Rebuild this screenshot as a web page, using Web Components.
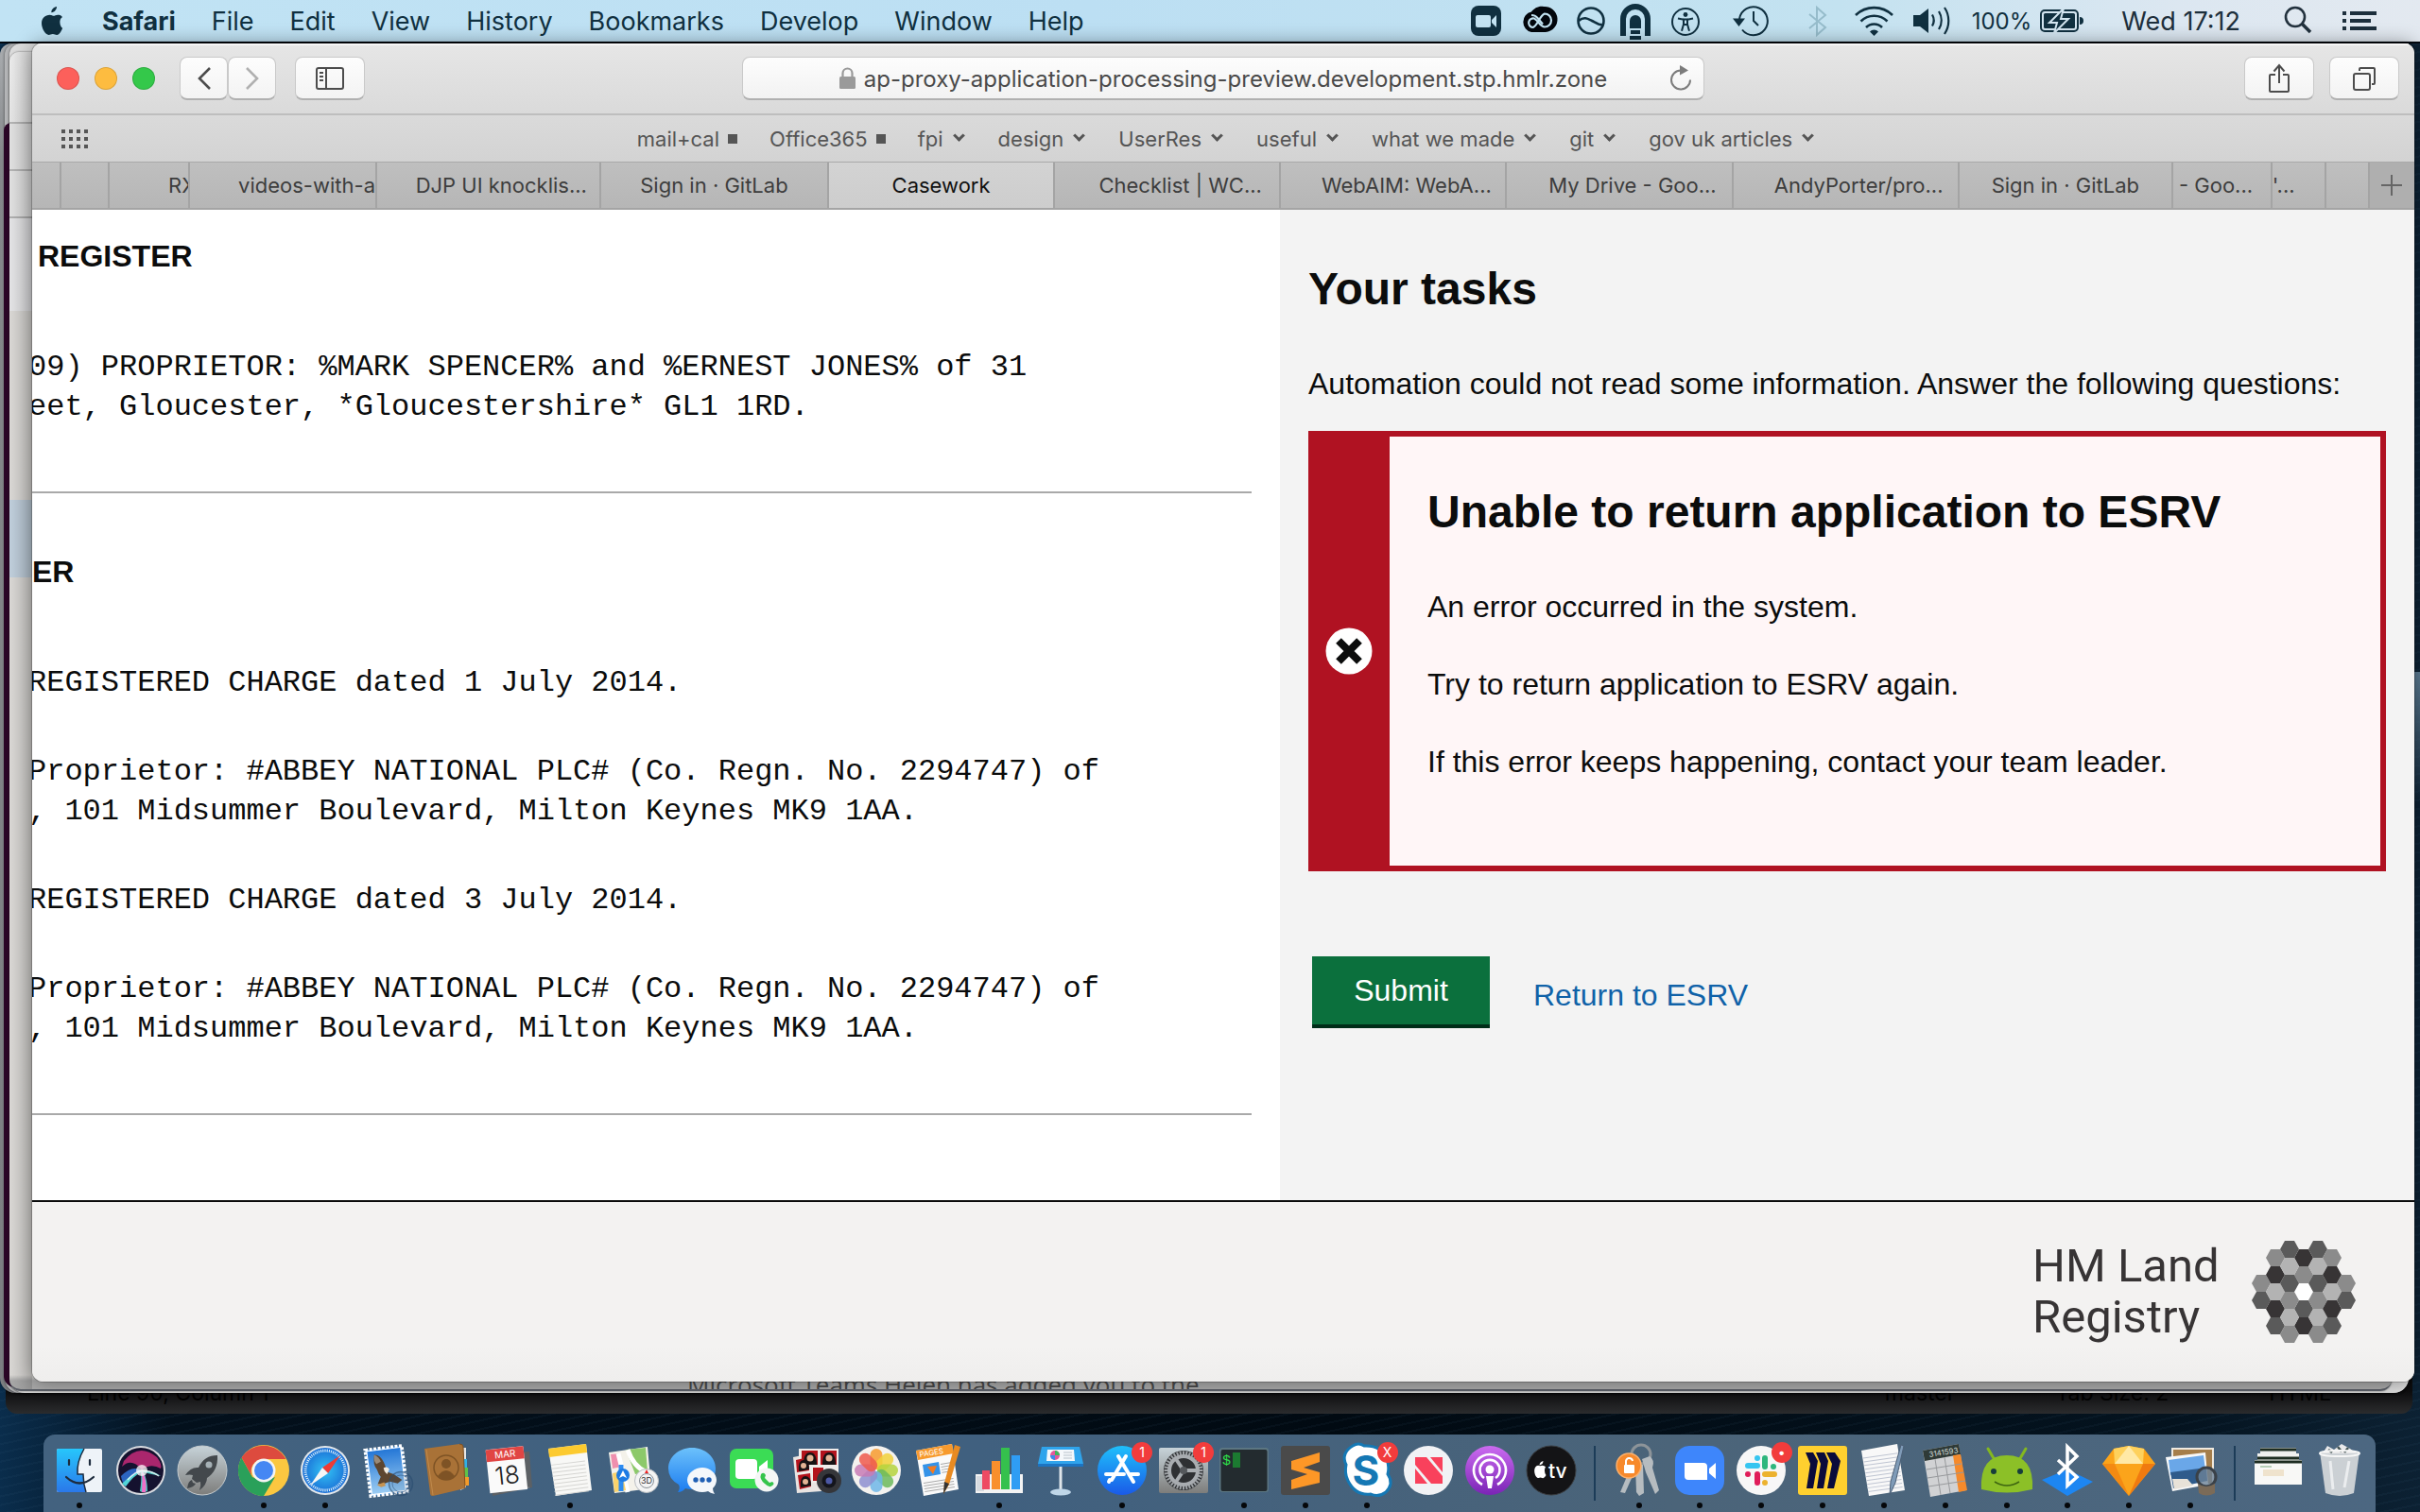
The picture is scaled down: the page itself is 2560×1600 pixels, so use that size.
<!DOCTYPE html>
<html lang="en">
<head>
<meta charset="utf-8">
<title>Casework</title>
<style>
  html, body { margin: 0; height: 100%; }
  body { font-family: Inter, "Liberation Sans", sans-serif; background: #04121f; overflow: hidden; }
</style>
</head>
<body>
<mac-desktop>
  <menu-bar slot="menu"></menu-bar>
  <background-windows slot="windows"></background-windows>
  <browser-window slot="windows">
    <browser-toolbar></browser-toolbar>
    <favourites-bar></favourites-bar>
    <tab-strip></tab-strip>
    <casework-page>
      <register-pane slot="register"></register-pane>
      <tasks-pane slot="tasks">
        <error-banner heading="Unable to return application to ESRV">
          <p>An error occurred in the system.</p>
          <p>Try to return application to ESRV again.</p>
          <p>If this error keeps happening, contact your team leader.</p>
        </error-banner>
      </tasks-pane>
      <site-footer slot="footer"></site-footer>
    </casework-page>
  </browser-window>
  <app-dock slot="dock"></app-dock>
</mac-desktop>

<script>
const define = (name, html) => {
  const template = document.createElement('template');
  template.innerHTML = html;
  customElements.define(name, class extends HTMLElement {
    constructor() {
      super();
      this.attachShadow({ mode: 'open' }).append(template.content.cloneNode(true));
    }
  });
};

/* ---------- desktop ---------- */
define('mac-desktop', `
<style>
  :host { display: flex; flex-direction: column; height: 100vh; min-height: 900px;
    background:
      repeating-linear-gradient(168deg, rgba(70,110,140,.07) 0 2px, transparent 2px 9px),
      linear-gradient(90deg, #0a2d4c 0, #03101c 7%, #010a12 55%, #04131f 90%, #0c2133 100%); }
  .space { position: relative; flex: 1; background: linear-gradient(#5c7c94 0, #0000 140px) right / 6px 140px no-repeat; }
</style>
<slot name="menu"></slot>
<div class="space"><slot name="windows"></slot></div>
<slot name="dock"></slot>`);

/* ---------- menu bar ---------- */
define('menu-bar', `
<style>
  :host { display: flex; align-items: center; justify-content: space-between; height: 44px; padding: 0 46px 0 42px;
    background: linear-gradient(90deg, #c1e3f4 0, #bcdff3 45%, #c3e2f0 76%, #dce7f1 90%, #e3e9f0 100%); color: #103040;
    border-bottom: 2px solid #02080f; box-sizing: content-box; margin-bottom: -2px; }
  nav, .status { display: flex; align-items: center; }
  nav { gap: 38px; }
  .status { gap: 16px; }
  button { all: unset; font-size: 27px; line-height: 32px; padding-top: 2px; white-space: nowrap; }
  .app { font-weight: 700; }
  svg { display: block; }
  .power { display: flex; align-items: center; gap: 9px; padding-right: 22px; font-size: 24px; }
  .clock { padding-right: 30px; color: #1d2f3c; }
</style>
<nav aria-label="Application menu">
  <svg width="28" height="36" viewBox="0 -2 28 36" fill="#103040"><path d="M18 1c.3 2.600-2.500 6.400-5.600 6.200C12 4.400 15 1.300 18 1zM21.400 16.800c0-3 2.400-4.500 2.600-4.700-1.500-2.200-3.700-2.400-4.500-2.400-1.900-.2-3.700 1.100-4.700 1.100s-2.400-1.100-4-1.100C5.600 9.800 2 13.200 2 18.600 2 24.200 6 31 9.600 31c1.500 0 2.400-1 4.300-1s2.500 1 4.200 1c2.800 0 5.300-5 6-7.300-.2-.1-2.700-1.300-2.700-6.900z"/></svg>
  <button class="app">Safari</button><button>File</button><button>Edit</button><button>View</button><button>History</button><button>Bookmarks</button><button>Develop</button><button>Window</button><button>Help</button>
</nav>
<div class="status">
  <svg width="36" height="36" viewBox="0 0 36 36"><rect x="2" y="2" width="32" height="32" rx="8" fill="#103040"/><path d="M9 12h12q2 0 2 2v9q0 2-2 2H9q-2 0-2-2v-9q0-2 2-2zM24 17l5-5v13l-5-5z" fill="#c3e3f2"/></svg>
  <svg width="44" height="36" viewBox="0 0 44 36" fill="none"><path d="M14 8.500C17 4.500 22 2 27 3a13.500 13.500 0 0 1 2 27H14a11 11 0 0 1 0-21.500z" fill="#02060c"/><g stroke="#c3e3f2" stroke-width="2.200"><path d="M20 18l-3-2.500a4 4 0 1 0-2 9.500c5 0 7-12 13-14.500a6.500 6.500 0 1 1 0 14c-3 0-5-3-8-6.500" /><path d="M14 12q4 0 6 2.500l6 7"/></g></svg>
  <svg width="32" height="36" viewBox="0 0 32 36" fill="none" stroke="#103040" stroke-width="2.600"><circle cx="17" cy="18" r="13.500"/><path d="M4 18c6-5 10-2 14 0s8 5 11 4"/></svg>
  <svg width="34" height="40" viewBox="0 0 34 40" fill="#103040"><path d="M0 36V18a16 16 0 0 1 32 0v18h-6V18a10 10 0 0 0-20 0v18z"/><path d="M10 28v-8a6 6 0 0 1 12 0v8zM11 30h10v4H11zM10 36h12v4H10z"/></svg>
  <svg width="38" height="36" viewBox="0 0 38 36" fill="none" stroke="#103040" stroke-width="2"><circle cx="19" cy="19" r="14"/><circle cx="19" cy="11.500" r="2.400" fill="#103040" stroke="none"/><path d="M11 15.500l6 1.200v5l-2 7M27 15.500l-6 1.200v5l2 7M16 16.500h6M17 22h4M17 16v6h4v-6" stroke-width="2"/></svg>
  <svg width="72" height="36" viewBox="0 0 72 36" fill="none" stroke="#103040" stroke-width="2"><path d="M22 16A15 15 0 1 1 25 27.500"/><path d="M15 15.500h13L21.500 24z" fill="#103040" stroke="none"/><path d="M37 8v10l5 5"/></svg>
  <svg width="34" height="36" viewBox="0 0 34 36" fill="none" stroke="#96bccb" stroke-width="2"><path d="M8 11l17 14-9 8V4l9 8L8 26"/></svg>
  <svg width="52" height="36" viewBox="0 0 52 36" fill="none" stroke="#103040" stroke-width="2.600"><path d="M7 12a28 28 0 0 1 39 0M12.500 18.500a20 20 0 0 1 28 0M18 25a12 12 0 0 1 17 0"/><path d="M22 29.500a6 6 0 0 1 9 0L26.500 34z" fill="#103040" stroke="none"/></svg>
  <svg width="46" height="36" viewBox="0 0 46 36" fill="none" stroke="#103040" stroke-width="2.200"><path d="M0 12h7l9-7v26l-9-7H0z" fill="#103040" stroke="none"/><path d="M20 11.500a12 12 0 0 1 0 12M27 8a18 18 0 0 1 0 19M33 4a25 25 0 0 1 0 28"/></svg>
  <span class="power"><span>100%</span>
    <svg width="48" height="26" viewBox="0 0 48 26" fill="none"><rect x="1" y="2" width="39" height="22" rx="4" stroke="#103040" stroke-width="2"/><rect x="4" y="5" width="33" height="16" rx="1.500" fill="#103040"/><path d="M42 9q4 0 4 4t-4 4z" fill="#103040"/><path d="M25 0L10 15h8l-3 11 15-15h-8z" fill="#103040" stroke="#d2e5f0" stroke-width="2"/></svg></span>
  <button class="clock">Wed 17:12</button>
  <svg width="30" height="32" viewBox="0 0 30 32" fill="none" stroke="#22313d"><circle cx="12" cy="12" r="10" stroke-width="2.600"/><path d="M19 19l9 9" stroke-width="3.600"/></svg>
  <svg width="52" height="28" viewBox="0 0 52 28" fill="#1d2f3c"><path d="M16 4h4v4h-4zM16 12h4v4h-4zM16 20h4v4h-4zM24 4h28v4H24zM24 12h22v4H24zM24 20h28v4H24z"/></svg>
</div>`);

/* ---------- windows stacked behind the browser ---------- */
define('background-windows', `
<style>
  :host { display: block; position: absolute; inset: 0; }
  .win { position: absolute; overflow: hidden; box-sizing: border-box; }
  .edge { right: 12px; top: 2px; bottom: 44px; border-radius: 12px 0 16px 16px; box-shadow: 0 0 3px #0008; }
  .a { left: 0; background: linear-gradient(#aaadb0, #85888b 120px, #7c7e82); }
  .b { left: 5px; background: #b4b5b7; }
  .c { left: 10px; background: #dcdcdc; }
  .term { left: 4px; right: 40px; top: 86px; bottom: 50px; border-radius: 8px 0 0 12px; background: #2a0526; }
  .editor { left: 6px; right: 8px; top: 800px; bottom: 22px; border-radius: 12px; background: linear-gradient(#0d0d0e 0, #0d0d0e calc(100% - 24px), #2b2c2e 100%);
    display: flex; align-items: flex-end; justify-content: space-between; padding: 0 86px 8px 86px; color: #030303; font-size: 23px; line-height: 28px; white-space: pre; }
  .editor div { display: flex; gap: 106px; }
  .mail { left: 10px; right: 30px; top: 11px; bottom: 46px; border-radius: 10px 10px 12px 12px; border-bottom: 2px solid #5c6068; box-shadow: 0 0 2px #0009;
    background: linear-gradient(90deg, #0000 0, #0000001f 24px) 0 0 / 24px 100% no-repeat,
      linear-gradient(#ececec 0, #e4e4e4 74px, #b4b4b4 74px 76px, #e0e0e0 76px 124px, #b4b4b4 124px 126px, #e0e0e0 126px 174px, #b0b0b0 174px 176px, #e3e3e5 176px 274px, #d9d7d4 274px 474px, #bfcedb 474px 556px, #d9d7d4 556px 1400px, #a9a9a9 1406px);
    display: flex; align-items: flex-end; padding-left: 717px; color: #484848; font: 26px/26px "Open Sans", sans-serif; white-space: nowrap; }
  .mail span { height: 18px; }
</style>
<div class="win editor"><span>Line 90, Column 1</span><div><span>master</span><span>Tab Size: 2</span><span>HTML</span></div></div>
<div class="win edge a"></div><div class="win edge b"></div><div class="win edge c"></div><div class="win term"></div>
<div class="win mail"><span>Microsoft Teams Helen has added you to the</span></div>`);

/* ---------- browser ---------- */
define('browser-window', `
<style>
  :host { display: flex; flex-direction: column; position: absolute; inset: 2px 6px 56px 34px; overflow: hidden;
    border-radius: 10px 10px 12px 12px; background: #f3f3f3; box-shadow: 0 0 0 1px #0003, 0 0 20px #0006; }
</style>
<slot></slot>`);

define('browser-toolbar', `
<style>
  :host { display: grid; grid-template-columns: 1fr 1018px 1fr; align-items: center; height: 74px; padding: 0 16px; flex: none;
    box-shadow: inset 0 2px #f6f6f6; background: linear-gradient(#e6e6e6, #dadada); border-bottom: 2px solid #bebebe; box-sizing: content-box; }
  .left, .right { display: flex; align-items: center; }
  .right { justify-content: flex-end; gap: 16px; }
  .lights { display: flex; gap: 16px; margin: 0 26px 0 10px; }
  .lights button { all: unset; width: 24px; height: 24px; border-radius: 50%; background: var(--c); box-shadow: inset 0 0 0 1px #0002; }
  .btn { appearance: none; border: 1px solid #c9c9c9; border-bottom: 2px solid #b0b0b0; border-radius: 8px; background: linear-gradient(#fdfdfd, #f3f3f3);
    width: 74px; height: 46px; padding: 0; display: grid; place-items: center; }
  .nav { width: 51px; }
  .side { margin-left: 20px; }
  .url { display: grid; grid-template-columns: 1fr auto 1fr; align-items: center; height: 46px; box-sizing: border-box;
    border: 1px solid #c9c9c9; border-bottom: 2px solid #b0b0b0; border-radius: 8px; background: linear-gradient(#fdfdfd, #f2f2f2); }
  label { display: flex; align-items: center; gap: 9px; grid-column: 2; }
  input { all: unset; field-sizing: content; min-width: 200px; padding-top: 2px; font-size: 24px; line-height: 32px; color: #4a4a4a; }
  .reload { all: unset; justify-self: end; padding-right: 12px; }
  svg { display: block; }
</style>
<div class="left">
  <div class="lights"><button style="--c:#fc605b" aria-label="Close"></button><button style="--c:#fdbc40" aria-label="Minimise"></button><button style="--c:#34c84a" aria-label="Zoom"></button></div>
  <button class="btn nav" aria-label="Back"><svg width="16" height="26" viewBox="0 0 16 26" fill="none" stroke="#4c4c4c" stroke-width="2.600"><path d="M14 2L3 13l11 11"/></svg></button>
  <button class="btn nav" aria-label="Forward"><svg width="16" height="26" viewBox="0 0 16 26" fill="none" stroke="#b0b0b0" stroke-width="2.600"><path d="M2 2l11 11L2 24"/></svg></button>
  <button class="btn side" aria-label="Sidebar"><svg width="32" height="26" viewBox="0 0 32 26" fill="none" stroke="#4c4c4c" stroke-width="2"><rect x="2" y="2" width="28" height="22" rx="2"/><path d="M12 2v22"/><path d="M5 7h4M5 11h4M5 15h4"/></svg></button>
</div>
<div class="url">
  <label><svg width="17" height="24" viewBox="0 0 17 24"><rect y="10" width="17" height="13" rx="1.500" fill="#9a9a9a"/><path d="M3.500 11V6.500a5 5 0 0 1 10 0V11" fill="none" stroke="#9a9a9a" stroke-width="2.200"/></svg>
  <input aria-label="Address" value="ap-proxy-application-processing-preview.development.stp.hmlr.zone"></label>
  <button class="reload" aria-label="Reload"><svg width="24" height="30" viewBox="0 0 24 30"><path d="M12 6.500a10 10 0 1 0 10 10" fill="none" stroke="#7c7c7c" stroke-width="2"/><path d="M11 1l9 5.500-9 5z" fill="#7c7c7c"/></svg></button>
</div>
<div class="right">
  <button class="btn" aria-label="Share"><svg width="24" height="32" viewBox="0 0 24 32" fill="none" stroke="#4c4c4c" stroke-width="2"><path d="M8 12H3q-1 0-1 1v16q0 1 1 1h18q1 0 1-1V13q0-1-1-1h-5M12 21V3M6.500 8.500L12 2l5.500 6.500"/></svg></button>
  <button class="btn" aria-label="Tabs"><svg width="26" height="26" viewBox="0 0 26 26" fill="none" stroke="#4c4c4c" stroke-width="2"><rect x="2" y="8" width="17" height="17" rx="2"/><path d="M8 5V3q0-1 1-1h14q1 0 1 1v15q0 1-1 1h-2"/></svg></button>
</div>`);

define('favourites-bar', `
<style>
  :host { display: grid; grid-template-columns: 1fr auto 1fr; align-items: center; height: 49px; flex: none; padding: 0 24px 0 30px; background: linear-gradient(#dadada, #d3d3d3); border-bottom: 1px solid #a9a9a9; }
  nav { display: flex; gap: 34px; }
  nav button { all: unset; display: flex; align-items: center; gap: 9px; font-size: 22px; line-height: 28px; color: #555; }
  nav button::after { content: ""; width: 9px; height: 9px; box-sizing: border-box; border: solid #555; border-width: 0 3px 3px 0; transform: rotate(45deg); margin: -6px 3px 0; }
  nav .all::after { width: 10px; height: 10px; background: #555; transform: none; border: 0; margin: 0; }
  .grid { all: unset; }
  svg { display: block; }
</style>
<button class="grid" aria-label="Show favourites"><svg width="30" height="22" viewBox="0 0 30 22" stroke="#555" stroke-width="4" stroke-dasharray="4 4"><path d="M1 3h28M1 11h28M1 19h28"/></svg></button>
<nav aria-label="Favourites">
  <button class="all">mail+cal</button><button class="all">Office365</button><button>fpi</button><button>design</button><button>UserRes</button><button>useful</button><button>what we made</button><button>git</button><button>gov uk articles</button>
</nav>`);

define('tab-strip', `
<style>
  :host { display: flex; height: 48px; flex: none; background: linear-gradient(#bfbfbf, #b6b6b6); border-bottom: 2px solid #a4a4a4; }
  button { all: unset; flex: var(--w) 1 0; min-width: 0; box-sizing: border-box; overflow: hidden; white-space: nowrap; text-align: center;
    border-right: 2px solid #a4a4a4; font-size: 22px; line-height: 48px; color: #3d3d3d; }
  .icon { text-indent: 28px; }
  .cut { text-align: left; }
  .far { text-indent: 62px; }
  .mid { text-indent: 51px; }
  .near { text-indent: 6px; }
  .on { background: linear-gradient(#d3d3d3, #cdcdcd); color: #111; }
  .add { border: 0; background: #afafaf; display: grid; place-items: center; }
</style>
<button style="--w:29" aria-label="Tab 1"></button><button style="--w:50" aria-label="Tab 2"></button><button class="cut far" style="--w:84">RX</button><button class="cut mid" style="--w:198">videos-with-ad</button><button class="icon" style="--w:238">DJP UI knocklis...</button><button style="--w:242">Sign in · GitLab</button><button class="on" style="--w:240">Casework</button><button class="icon" style="--w:240">Checklist | WC...</button><button class="icon" style="--w:240">WebAIM: WebA...</button><button class="icon" style="--w:240">My Drive - Goo...</button><button class="icon" style="--w:240">AndyPorter/pro...</button><button style="--w:227">Sign in · GitLab</button><button class="cut near" style="--w:104">- Goo...</button><button class="cut" style="--w:56">'...</button><button style="--w:44" aria-label="Tab 15"></button><button class="add" style="--w:48" aria-label="New tab"><svg width="22" height="22" viewBox="0 0 22 22" stroke="#666" stroke-width="2"><path d="M11 0v22M0 11h22"/></svg></button>`);

/* ---------- page ---------- */
define('casework-page', `
<style>
  :host { flex: 1; display: flex; flex-direction: column; min-height: 0; font-family: "Liberation Sans", Arial, sans-serif; font-size: 32px; line-height: 40px; color: #0b0c0c; }
  .cols { flex: 1; display: grid; grid-template-columns: 1320fr 1200fr; min-height: 0; }
</style>
<div class="cols"><slot name="register"></slot><slot name="tasks"></slot></div>
<slot name="footer"></slot>`);

define('register-pane', `
<style>
  :host { display: block; background: #fff; overflow: hidden; padding-right: 30px; }
  section { padding: 29px 0 68px; border-bottom: 2px solid #a9a9a9; }
  section + section { padding-top: 63px; }
  h2 { margin: 0 0 77px; font-size: 32px; line-height: 40px; }
  .indent { padding-left: 6px; }
  p { margin: 0 0 52px -4px; font: 32px/42px "Liberation Mono", "Courier New", monospace; white-space: pre; }
  p:last-child { margin-bottom: 0; }
</style>
<section>
  <h2 class="indent">REGISTER</h2>
  <p>09) PROPRIETOR: %MARK SPENCER% and %ERNEST JONES% of 31
eet, Gloucester, *Gloucestershire* GL1 1RD.</p>
</section>
<section>
  <h2>ER</h2>
  <p>REGISTERED CHARGE dated 1 July 2014.</p>
  <p>Proprietor: #ABBEY NATIONAL PLC# (Co. Regn. No. 2294747) of
, 101 Midsummer Boulevard, Milton Keynes MK9 1AA.</p>
  <p>REGISTERED CHARGE dated 3 July 2014.</p>
  <p>Proprietor: #ABBEY NATIONAL PLC# (Co. Regn. No. 2294747) of
, 101 Midsummer Boulevard, Milton Keynes MK9 1AA.</p>
</section>`);

define('tasks-pane', `
<style>
  :host { display: block; background: #f3f3f3; padding: 56px 30px 0; min-width: 0; }
  h1 { margin: 0 0 52px; font-size: 48px; line-height: 56px; }
  p { margin: 0 0 30px; }
  form { display: flex; align-items: center; gap: 46px; padding: 90px 0 0 4px; margin: 0; }
  button { font: inherit; color: #fff; background: #0b703d; border: 0; border-radius: 0; box-shadow: 0 4px #002d18; width: 188px; height: 72px; padding: 0; }
  a { color: #1062a8; text-decoration: none; padding-top: 10px; }
</style>
<h1>Your tasks</h1>
<p>Automation could not read some information. Answer the following questions:</p>
<slot></slot>
<form onsubmit="return false"><button type="submit">Submit</button><a href="#esrv">Return to ESRV</a></form>`);

customElements.define('error-banner', class extends HTMLElement {
  constructor() {
    super();
    this.attachShadow({ mode: 'open' }).innerHTML = `
<style>
  :host { display: flex; border: 6px solid #b01222; background: #fff6f7; }
  .mark { width: 74px; padding-right: 6px; background: #b01222; display: grid; place-items: center; flex: none; }
  .body { padding: 52px 40px 48px; }
  h2 { margin: 0 0 52px; font-size: 48px; line-height: 56px; }
  ::slotted(p) { margin: 0 0 42px; }
</style>
<div class="mark"><svg width="50" height="50" viewBox="0 0 50 50"><circle cx="25" cy="25" r="24.500" fill="#fff"/><path d="M14 14l22 22M36 14L14 36" stroke="#0b0c0c" stroke-width="8"/></svg></div>
<div class="body"><h2></h2><slot></slot></div>`;
    this.shadowRoot.querySelector('h2').textContent = this.getAttribute('heading');
  }
});

customElements.define('site-footer', class extends HTMLElement {
  constructor() {
    super();
    // Honeycomb mark: [column, half-rows from the centre, shade]
    const shades = { d: '#373435', g: '#5a5a5a', m: '#8b8b8b', l: '#b3b3b3', w: '#ffffff' };
    const cols = { '-3': [-1, 'mg'], '-2': [-4, 'mdldg'], '-1': [-5, 'glgmlm'], 0: [-4, 'dmwgd'], 1: [-5, 'glgmlm'], 2: [-4, 'mdldg'], 3: [-1, 'mg'] };
    let hex = '';
    for (const [c, [start, row]] of Object.entries(cols)) {
      [...row].forEach((s, i) => {
        const x = 55 + c * 15, y = 55 + (start + i * 2) * 9;
        hex += `<path fill="${shades[s]}" d="M${x - 10} ${y}l5-9h10l5 9-5 9h-10z"/>`;
      });
    }
    this.attachShadow({ mode: 'open' }).innerHTML = `
<style>
  :host { display: flex; justify-content: flex-end; align-items: center; gap: 42px; height: 190px; flex: none; padding-right: 62px; border-top: 2px solid #0b0c0c; background: linear-gradient(#f3f2f1 80%, #efeeed); }
  .name { font: 49px/54px Roboto, sans-serif; color: #373435; width: 190px; white-space: nowrap; }
  svg { display: block; }
</style>
<div class="name">HM Land<br>Registry</div>
<svg width="110" height="110" viewBox="0 0 110 110">${hex}</svg>`;
  }
});

/* ---------- dock ---------- */
const petals = ['#f79b2e', '#f1d13a', '#b5d33d', '#6cba5c', '#6fb7e8', '#8d8fd0', '#c77bb5', '#ee5a4c']
  .map((c, i) => `<rect x="21.500" y="7" width="13" height="22" rx="6.500" fill="${c}" fill-opacity=".85" transform="rotate(${i * 45} 28 30)"/>`).join('');
const ticks = (r, n, len, col, w) => Array.from({ length: n }, (_, i) => `<path d="M28 ${30 - r}v${len}" stroke="${col}" stroke-width="${w}" transform="rotate(${i * 360 / n} 28 30)"/>`).join('');
const rows = (x, y, w, n, gap, col) => Array.from({ length: n }, (_, i) => `<path d="M${x} ${y + i * gap}h${w}" stroke="${col}"/>`).join('');

const icons = {
  Finder: `<rect x="4" y="7" width="48" height="46" rx="2" fill="#eef3f8"/><path d="M6 7h27q-8 14-7 27h6q0 10 3 19H6q-2 0-2-2V9q0-2 2-2z" fill="url(#blue)"/><path d="M33 7q-8 14-7 27h6q0 10 3 19" fill="none" stroke="#1d2b3d" stroke-width="1.500"/><path d="M17 19v5M39 19v5M14 37q14 13 29 0" fill="none" stroke="#1d2b3d" stroke-width="2.200" stroke-linecap="round"/>`,
  Siri: `<circle cx="28" cy="30" r="26" fill="#d9dbe0"/><circle cx="28" cy="30" r="24" fill="#15122f"/><path d="M10 20Q26 0 45 16q6 8 4 12-10-6-20 1Q18 16 8 26z" fill="#c42a78" opacity=".85"/><path d="M7 36q12-12 21-6Q18 38 12 47q-4-4-5-11z" fill="#2f6fd0" opacity=".9"/><path d="M8 44q12-12 22-14 12 0 19 6-10-2-18-4 4 8 4 20-5 2-8 0 2-12 1-20-8 4-16 15z" fill="#58e6da" opacity=".85"/><path d="M29 30q6 10 4 23h-4q1-12 0-23z" fill="#ef6fc8"/><circle cx="29" cy="30" r="6" fill="#fff" opacity=".75"/><path d="M14 40q8-9 15-10 10 0 18 6" stroke="#fff" stroke-width="1.500" opacity=".8"/>`,
  Launchpad: `<circle cx="28" cy="30" r="26" fill="url(#silver)" stroke="#c5cbce" stroke-width="1"/><path d="M44 14q-14 0-20 13-8-1-14 8 5-1 8 0l-1 4 5 4 4-1q1 4-1 9 8-6 8-13 12-8 11-24z" fill="#43484c"/><circle cx="35" cy="24" r="3.500" fill="#a5b0b5"/><path d="M17 40q-4 1-5 9 7-1 9-5l-3-1z" fill="#43484c"/>`,
  Chrome: `<circle cx="28" cy="30" r="27" fill="#fbc740"/><path d="M4.600 16.500A27 27 0 0 0 28 57l12-20-12 5-12-5z" fill="#2aa05a"/><path d="M4.600 16.500L16 37a13 13 0 0 1 12-19h23.400A27 27 0 0 0 4.600 16.500z" fill="#dd4b3e"/><circle cx="28" cy="30" r="12.500" fill="#f4f4f4"/><circle cx="28" cy="30" r="10" fill="#4587f3"/>`,
  Safari: `<circle cx="28" cy="30" r="26" fill="#e4e8eb"/><circle cx="28" cy="30" r="24" fill="url(#azure)"/>${ticks(22.500, 60, 3, '#e8f6ff', 1)}<path d="M44 14L31 33l-6-6z" fill="#ee3b34"/><path d="M12 46l13-19 6 6z" fill="#f6f6f6"/>`,
  Mail: `<g transform="rotate(-7 28 30)"><rect x="8" y="6" width="39" height="49" fill="#3f8fe0" stroke="#fff" stroke-width="3.500" stroke-dasharray="3 1.500"/><rect x="9.500" y="7.500" width="36" height="46" fill="url(#azure2)" stroke="#fff"/><path d="M17 12q6 0 9 9l3 11 6 3 8 7-5 3-8-3-8 2-5-1 4-7q-2-3-3-8-4-6-1-16z" fill="#5d4630"/><path d="M17 12q5 3 6 8l-5 2q-3-4-1-10z" fill="#9a8a78"/><path d="M25 27q4-2 6 2l-3 5q-3-3-3-7z" fill="#f3ece0"/><path d="M16 44l8-2 1 4-5 1z" fill="#c69452"/></g><circle cx="43" cy="44" r="12.500" fill="#2a4c70" fill-opacity=".15" stroke="#2a4c70" stroke-opacity=".6" stroke-width="1.500"/><circle cx="43" cy="44" r="9" stroke="#2a4c70" stroke-opacity=".5"/>`,
  Contacts: `<path d="M42 6h6v42l-6 3z" fill="#e6e6e6"/><path d="M44 18h5v9h-5z" fill="#31b0e6"/><path d="M44 27h6v10h-6z" fill="#5ec24a"/><path d="M44 37h7v9h-7z" fill="#f39b2b"/><path d="M4 7l37-5q4 0 4 3l2 44L13 57q-3 0-3-3z" fill="#a97237"/><path d="M6 8l7 48" stroke="#c08a4c"/><path d="M41 2q4 0 4 3l2 44" stroke="#7c5024"/><circle cx="27" cy="27" r="13" stroke="#7e5325" stroke-width="1.500"/><circle cx="27" cy="23" r="5" fill="#7e5325"/><path d="M18 36q9-12 18 0-9 8-18 0z" fill="#7e5325"/>`,
  Calendar: `<path d="M4 12l46-2 3 38-42 9z" fill="#5c6064"/><path d="M8 54l42-6" stroke="#8a8d90"/><g transform="rotate(-6 28 30)"><rect x="6" y="6" width="40" height="46" rx="1" fill="#fafafa"/><rect x="6" y="6" width="40" height="13" fill="#e14543"/><text x="26" y="16" font-size="10" fill="#fff" text-anchor="middle">MAR</text><text x="26" y="44" font-size="26" font-weight="300" fill="#222" text-anchor="middle">18</text></g>`,
  Notes: `<path d="M5 7l40-5 6 49-38 6z" fill="#f8f8f6"/><path d="M5 7l40-5 1 9-40 5z" fill="#fcca2f"/><g transform="rotate(-7 28 30)">${rows(9, 22, 36, 9, 4, '#d5d5d2')}</g>`,
  Maps: `<path d="M4 11l41-6 4 44-39 5z" fill="#f4f2ea"/><path d="M6 13l10-1 2 14-10 2z" fill="#ef8fae"/><path d="M22 8l21-2 2 26-13 2z" fill="#8cc96a"/><path d="M24 8q6 18 20 24M14 12l10 41" stroke="#fff" stroke-width="5"/><path d="M8 33l10-2 4 20-12 2z" fill="#fbd36b"/><path d="M17 24v28" stroke="#2e8cf0" stroke-width="5"/><circle cx="19" cy="35" r="7" fill="#1d7be4"/><path d="M19 30l4 8-4-2-4 2z" fill="#fff"/><circle cx="44" cy="41" r="12.500" fill="#f4f4f4" stroke="#b9bec2"/><circle cx="44" cy="41" r="7.500" stroke="#8a9096"/><text x="44" y="44" font-size="9" fill="#333" text-anchor="middle">3D</text><path d="M44 29l2 4h-4z" fill="#e22"/>`,
  Messages: `<path d="M27 6c14 0 25 10 25 22S41 50 27 50q-4 0-7-1-3 4-8 4 3-4 1-8Q2 39 2 28C2 16 13 6 27 6z" fill="url(#msg)"/><path d="M38 27c8 0 15 6 15 13q0 5-4 9 0 3 2 6-5-1-7-3-3 1-6 1c-9 0-16-6-16-13s8-13 16-13z" fill="#f4f7fb"/><g fill="#1f5fb5"><circle cx="31" cy="40" r="2.700"/><circle cx="38" cy="40" r="2.700"/><circle cx="45" cy="40" r="2.700"/></g>`,
  FaceTime: `<rect x="2" y="7" width="46" height="42" rx="7" fill="#3bdc55"/><rect x="8" y="18" width="23" height="21" rx="4" fill="#fff"/><path d="M33 26l9-7v19l-9-7z" fill="#fff"/><circle cx="41" cy="40" r="12.500" fill="#f4f6f5"/><path d="M35 34q3-3 5 1l-1 3 5 5 3-1q3 2 0 4-3 3-8-2-6-5-4-10z" fill="#35c44c"/>`,
  'Photo Booth': `<path d="M4 16l30-6v42L8 54z" fill="#e9e4e2"/><rect x="10" y="7" width="42" height="36" fill="#f0ecea"/><g fill="#b3121c"><path d="M7 19l13-3 1 14-13 2zM9 35l13-2 1 14-12 3zM13 9h17v15H13zM33 9h17v15H33zM25 27h11v14H25z"/></g><g fill="#171214"><path d="M10 31q-1-12 5-12t6 10zM12 48q-1-12 5-12t6 10zM15 24q0-13 7-13t7 13zM35 24q0-13 7-13t7 13z"/></g><g fill="#e3b395"><circle cx="15" cy="25" r="3"/><circle cx="17" cy="42" r="3"/><circle cx="22" cy="17" r="3.500"/><circle cx="42" cy="17" r="3.500"/></g><circle cx="42" cy="41" r="13" fill="#35363a"/><circle cx="42" cy="41" r="7.500" fill="#14151c"/><circle cx="42" cy="41" r="3.500" fill="#4c58a5"/>`,
  Photos: `<circle cx="28" cy="30" r="26" fill="#f4f2ef"/>${petals}`,
  Pages: `<path d="M5 9l38-7 7 48-37 7z" fill="#fafafa"/><path d="M5 9l38-7 2 10-38 7z" fill="#f79a2d"/><text x="9" y="16" font-size="8" fill="#fff" transform="rotate(-9 9 16)">PAGES</text><path d="M12 24l17-3 2 13-17 3z" fill="#3593e8"/><path d="M17 26l10-1-4 9z" fill="#f47b20"/><g transform="rotate(-9 28 30)">${rows(32, 24, 12, 4, 3, '#aaa')}${rows(11, 41, 32, 4, 3, '#aaa')}</g><path d="M46 3l6 2-12 40-6 10 1-12z" fill="#e98b22"/><path d="M35 42l5 2-6 11z" fill="#333"/>`,
  Numbers: `<path d="M3 34h50v20H3z" fill="#f3f3f3"/><path d="M4 36h8v16H4z" fill="#d7dbe0"/><rect x="10" y="30" width="8" height="20" fill="#ee4a63"/><rect x="20" y="20" width="9" height="30" fill="#f98f2c"/><rect x="30" y="6" width="9" height="44" fill="#35c14d"/><rect x="41" y="14" width="9" height="36" fill="#2f9df4"/>`,
  Keynote: `<path d="M8 5h40l4 18H4z" fill="#2fa4ec"/><path d="M4 23h48v3H4z" fill="#1c74c2"/><path d="M14 8h28l1 12H13z" fill="#f5f8fb"/><circle cx="22" cy="14" r="5" fill="#e5589a"/><path d="M22 14V9a5 5 0 0 1 5 5z" fill="#41b55e"/><path d="M17 14h5v5a5 5 0 0 1-5-5z" fill="#3b8bea"/><path d="M31 11h9M31 14h9M31 17h9" stroke="#b9c2cb"/><path d="M28 26v26" stroke="#dfe5ea" stroke-width="3"/><ellipse cx="28" cy="53" rx="11" ry="3.500" fill="#bfd6e8"/>`,
  'App Store': `<circle cx="28" cy="30" r="26" fill="url(#msg2)"/><path d="M24 15l16 27M32 15L17 40M11 34h19M37 34h8M15 40l-1 2" stroke="#fff" stroke-width="4" stroke-linecap="round"/>`,
  'System Preferences': `<rect x="2" y="6" width="52" height="48" rx="2" fill="url(#silver)"/><circle cx="28" cy="30" r="21" fill="#2e3033"/>${ticks(20.500, 36, 4, '#9ea2a6', 2)}<circle cx="28" cy="30" r="15" stroke="#a8acb0" stroke-width="4"/><path d="M28 30H42M28 30L20 18M28 30l-8 12" stroke="#a8acb0" stroke-width="4"/><circle cx="28" cy="30" r="4" fill="#55585c"/>`,
  Terminal: `<rect x="2" y="6" width="52" height="47" rx="3" fill="#5c7682"/><rect x="3.500" y="8" width="49" height="44" rx="2" fill="#232b2f"/><text x="5" y="24" font-size="15" font-family="Liberation Mono" fill="#2ee04a">$</text><rect x="16" y="11" width="8" height="16" fill="#1c7a31"/>`,
  'Sublime Text': `<rect x="2" y="4" width="52" height="52" rx="3" fill="#4a4a4a"/><path d="M13 20l30-9v10l-17 6 17 5v11L13 50V40l17-6-17-5z" fill="#fd9727"/>`,
  Skype: `<path d="M13 4q6-4 12 0 18-1 24 14 3 9 1 16 7 10-2 19-8 6-16 2-16 2-24-14-4-8-2-17Q0 12 13 4z" fill="#fff" stroke="#1578b4" stroke-width="3"/><text x="27" y="46" font-size="44" font-weight="700" fill="#1578b4" text-anchor="middle">S</text>`,
  News: `<circle cx="28" cy="30" r="26" fill="#f1f2f5"/><path d="M14 16h12l17 20v8H31L14 24z" fill="#f9415c"/><path d="M30 16h13v16zM14 28l13 16H14z" fill="#f9415c"/>`,
  Podcasts: `<circle cx="28" cy="30" r="26" fill="url(#purple)"/><path d="M20 45a17 17 0 1 1 16 0M22 38a10.500 10.500 0 1 1 12 0" stroke="#fff" stroke-width="2.600"/><circle cx="28" cy="29" r="4.500" fill="#fff"/><path d="M24 36h8l-2 13h-4z" fill="#fff"/>`,
  TV: `<circle cx="28" cy="30" r="26" fill="#141416" stroke="#3a3d40"/><path d="M19.500 20q0 3.500-4 4.500 0-3.500 4-4.500zM22.500 35q-2 4-4 3-2-1-4 0c-4 0-6.500-11-1.500-13q2-.5 3 .3 4-1.500 6 1-2.500 4 .500 8.700z" fill="#fff"/><text x="25" y="38" font-size="21" font-weight="500" fill="#fff">tv</text>`,
  Keychain: `<circle cx="30" cy="13" r="10" stroke="#8d9499" stroke-width="3"/><g fill="#b6bcc0"><path d="M31 18l8-3q6 4 3 12l7 24-4 4-10-23z"/><path d="M24 25l8-1 1 30-5 3-3-4z"/><path d="M16 34l5 2-8 18-5-1z"/></g><circle cx="17" cy="25" r="13" fill="#f7892b" stroke="#fbb06c" stroke-width="1.500"/><rect x="12" y="24" width="11" height="9" rx="1" fill="#fff"/><path d="M14 24v-3a3.500 3.500 0 0 1 7-1" stroke="#fff" stroke-width="2"/>`,
  Zoom: `<rect x="2" y="4" width="52" height="52" rx="15" fill="#3e86fb"/><path d="M12 22h20q4 0 4 4v14H16q-4 0-4-4zM38 28l7-6v17l-7-6z" fill="#fff"/>`,
  Slack: `<circle cx="28" cy="30" r="26" fill="#f7f7f7"/><g stroke-width="6" stroke-linecap="round"><path d="M24 17v0M14 25h10" stroke="#36c5f0"/><path d="M32 17v9M41 26h0" stroke="#2eb67d"/><path d="M32 43v0M32 34h10" stroke="#ecb22e"/><path d="M24 34v9M14 34h0" stroke="#e01e5a"/></g>`,
  Miro: `<rect x="2" y="4" width="52" height="52" rx="3" fill="#ffd02f"/><path d="M10 11h8l5 9-5 29h-7l4-26zM21 11h9l4 9-5 29h-7l4-26zM32 11h9l6 9-7 29h-7l5-26z" fill="#0b0b3b"/>`,
  TextEdit: `<path d="M4 9l38-7 8 49-38 6z" fill="#f8f8f8"/><g transform="rotate(-8 28 30)">${rows(8, 14, 37, 10, 4, '#bfc5d2')}</g><path d="M46 3l3 1-9 39-6 13 1-14z" fill="#7f9bb8" stroke="#4b5f76"/>`,
  Calculator: `<path d="M4 9l38-7 8 49-38 7z" fill="#d1d2d4"/><path d="M4 9l38-7 2 11-38 7z" fill="#2f3a37"/><path d="M36 14l8-1 7 38-9 2z" fill="#f58a2c"/><path d="M8 29l37-6M9 38l38-6M10 47l39-6M17 18l6 38M27 16l6 38" stroke="#97999c"/><text x="11" y="16" font-size="8" fill="#cfd8d2" transform="rotate(-9 11 16)">3141593</text>`,
  'Android Transfer': `<path d="M8 7l7 12M48 7l-7 12" stroke="#84b81f" stroke-width="3" stroke-linecap="round"/><path d="M1 50q-2-36 27-36t27 36q-27 7-54 0z" fill="#8cc027"/><circle cx="14" cy="31" r="3" fill="#173d3b"/><circle cx="42" cy="31" r="3" fill="#173d3b"/><path d="M15 42q13 8 26 0" stroke="#3c6410" stroke-width="1.500"/>`,
  Bluetooth: `<path d="M28 29l27 13-27 15L1 40z" fill="#1d86f2"/><path d="M18 19l20 18-10 9V5l10 10-20 19" stroke="#fff" stroke-width="3.500"/>`,
  Sketch: `<path d="M12 7l16-3 16 3 12 16-28 34L0 23z" fill="#fba41b"/><path d="M12 7l16-3 16 3-1 16H13z" fill="#fed15c"/><path d="M28 4l15 19H13z" fill="#ffe9a6"/><path d="M0 23h13l15 34z" fill="#f48a12"/><path d="M56 23H43L28 57z" fill="#f07a10"/>`,
  Preview: `<path d="M9 7h43v38H9z" fill="#a57e4b" stroke="#efe9df" stroke-width="2"/><path d="M2 16l42-5 3 34-38 7z" fill="#f8f8f8"/><path d="M5 19l37-5 2 16-37 5z" fill="#6aa7e8"/><path d="M7 32l38-5 1 14-36 8z" fill="#2f5b8b"/><path d="M9 39l16 0 6 7-20 4z" fill="#e8e2d8"/><circle cx="45" cy="37" r="10" fill="#6b8297" fill-opacity=".8" stroke="#3a4148" stroke-width="3"/><path d="M36 44q9 6 18 0v10q-9 5-17 0z" fill="#7b6b58"/>`,
  'Recent windows': `<rect x="9" y="6" width="38" height="28" fill="#edeeec"/><path d="M9 8h38" stroke="#1d2c20" stroke-width="3"/><rect x="6" y="12" width="44" height="28" fill="#f1f1ef"/><path d="M6 17h44" stroke="#1d2c20" stroke-width="3"/><rect x="3" y="19" width="50" height="26" fill="#f8f8f6"/><path d="M3 21h50" stroke="#1d2c20" stroke-width="3"/><path d="M12 29h22v7H12z" fill="#efe3cd"/><path d="M9 26h12" stroke="#77a77d"/>`,
  Bin: `<path d="M7 10h42l-6 44q-15 6-30 0z" fill="#d9dbdd" fill-opacity=".9"/><path d="M10 12l5-8 7 4 8-6 9 5 7 5z" fill="#e9e9ea"/><path d="M16 8l4 3M26 5l4 5M37 6l-4 5" stroke="#455" stroke-width="2.500"/><ellipse cx="28" cy="12" rx="21" ry="3" stroke="#f7f7f7" stroke-width="2"/><path d="M18 20l3 30M38 20l-5 28" stroke="#f3f4f5" stroke-width="3" opacity=".8"/>`
};
const defs = `<defs>
<linearGradient id="blue" x2="0" y2="1"><stop stop-color="#27c6fb"/><stop offset="1" stop-color="#2a78ea"/></linearGradient>
<linearGradient id="silver" x2="0" y2="1"><stop stop-color="#c7d3d9"/><stop offset="1" stop-color="#7d7d7b"/></linearGradient>
<radialGradient id="azure"><stop stop-color="#33c3f5"/><stop offset="1" stop-color="#1a6fd6"/></radialGradient>
<linearGradient id="azure2" x2="0" y2="1"><stop stop-color="#2376d6"/><stop offset="1" stop-color="#9ccdf3"/></linearGradient>
<linearGradient id="msg" x2="0" y2="1"><stop stop-color="#6cc1fb"/><stop offset="1" stop-color="#1c7cf0"/></linearGradient>
<linearGradient id="msg2" x2="0" y2="1"><stop stop-color="#1fc0fb"/><stop offset="1" stop-color="#1a5ae8"/></linearGradient>
<linearGradient id="purple" x2="0" y2="1"><stop stop-color="#cb6bf0"/><stop offset="1" stop-color="#7a24b5"/></linearGradient></defs>`;

customElements.define('dock-icon', class extends HTMLElement {
  connectedCallback() {
    if (this.shadowRoot) return;
    const name = this.getAttribute('name'), badge = this.getAttribute('badge');
    this.attachShadow({ mode: 'open' }).innerHTML = `
<style>
  :host { flex: 1; min-width: 0; display: block; }
  button { all: unset; width: 100%; display: flex; flex-direction: column; align-items: center; position: relative; padding-top: 8px; }
  svg { display: block; font-family: Inter, sans-serif; fill: none; overflow: visible; }
  i { width: 6px; height: 6px; margin-top: 6px; border-radius: 50%; background: #05070a; }
  b { position: absolute; top: 8px; right: 0; width: 22px; height: 22px; border-radius: 50%; background: #f23c3c; color: #fff; font-size: 14px; font-weight: 400; line-height: 22px; text-align: center; }
</style>
<button aria-label="${name}"><svg width="56" height="58" viewBox="0 0 56 58">${defs}${icons[name]}</svg>${this.hasAttribute('running') ? '<i></i>' : ''}${badge ? `<b>${badge}</b>` : ''}</button>`;
  }
});

customElements.define('app-dock', class extends HTMLElement {
  constructor() {
    super();
    const running = new Set(['Finder', 'Chrome', 'Safari', 'Notes', 'Numbers', 'App Store', 'Terminal', 'Sublime Text', 'Skype', 'Keychain', 'Zoom', 'Slack', 'Miro', 'TextEdit', 'Calculator', 'Android Transfer', 'Bluetooth', 'Sketch', 'Preview']);
    const badges = { 'App Store': '1', 'System Preferences': '1', Skype: 'X', Slack: '•' };
    const items = Object.keys(icons).map(n =>
      (n === 'Keychain' || n === 'Recent windows' ? '<hr>' : '') +
      `<dock-icon name="${n}"${running.has(n) ? ' running' : ''}${badges[n] ? ` badge="${badges[n]}"` : ''}></dock-icon>`).join('');
    this.attachShadow({ mode: 'open' }).innerHTML = `
<style>
  :host { display: flex; height: 82px; flex: none; margin: 0 47px 0 46px; padding: 0 6px; border-radius: 12px 12px 0 0; background: linear-gradient(90deg, #43627f, #40607f 40%, #4b6479 70%, #4c6781); }
  hr { width: 2px; height: 58px; margin: 12px 13px 0; border: 0; background: #1c3c58; flex: none; }
</style>${items}`;
  }
});
</script>
</body>
</html>
